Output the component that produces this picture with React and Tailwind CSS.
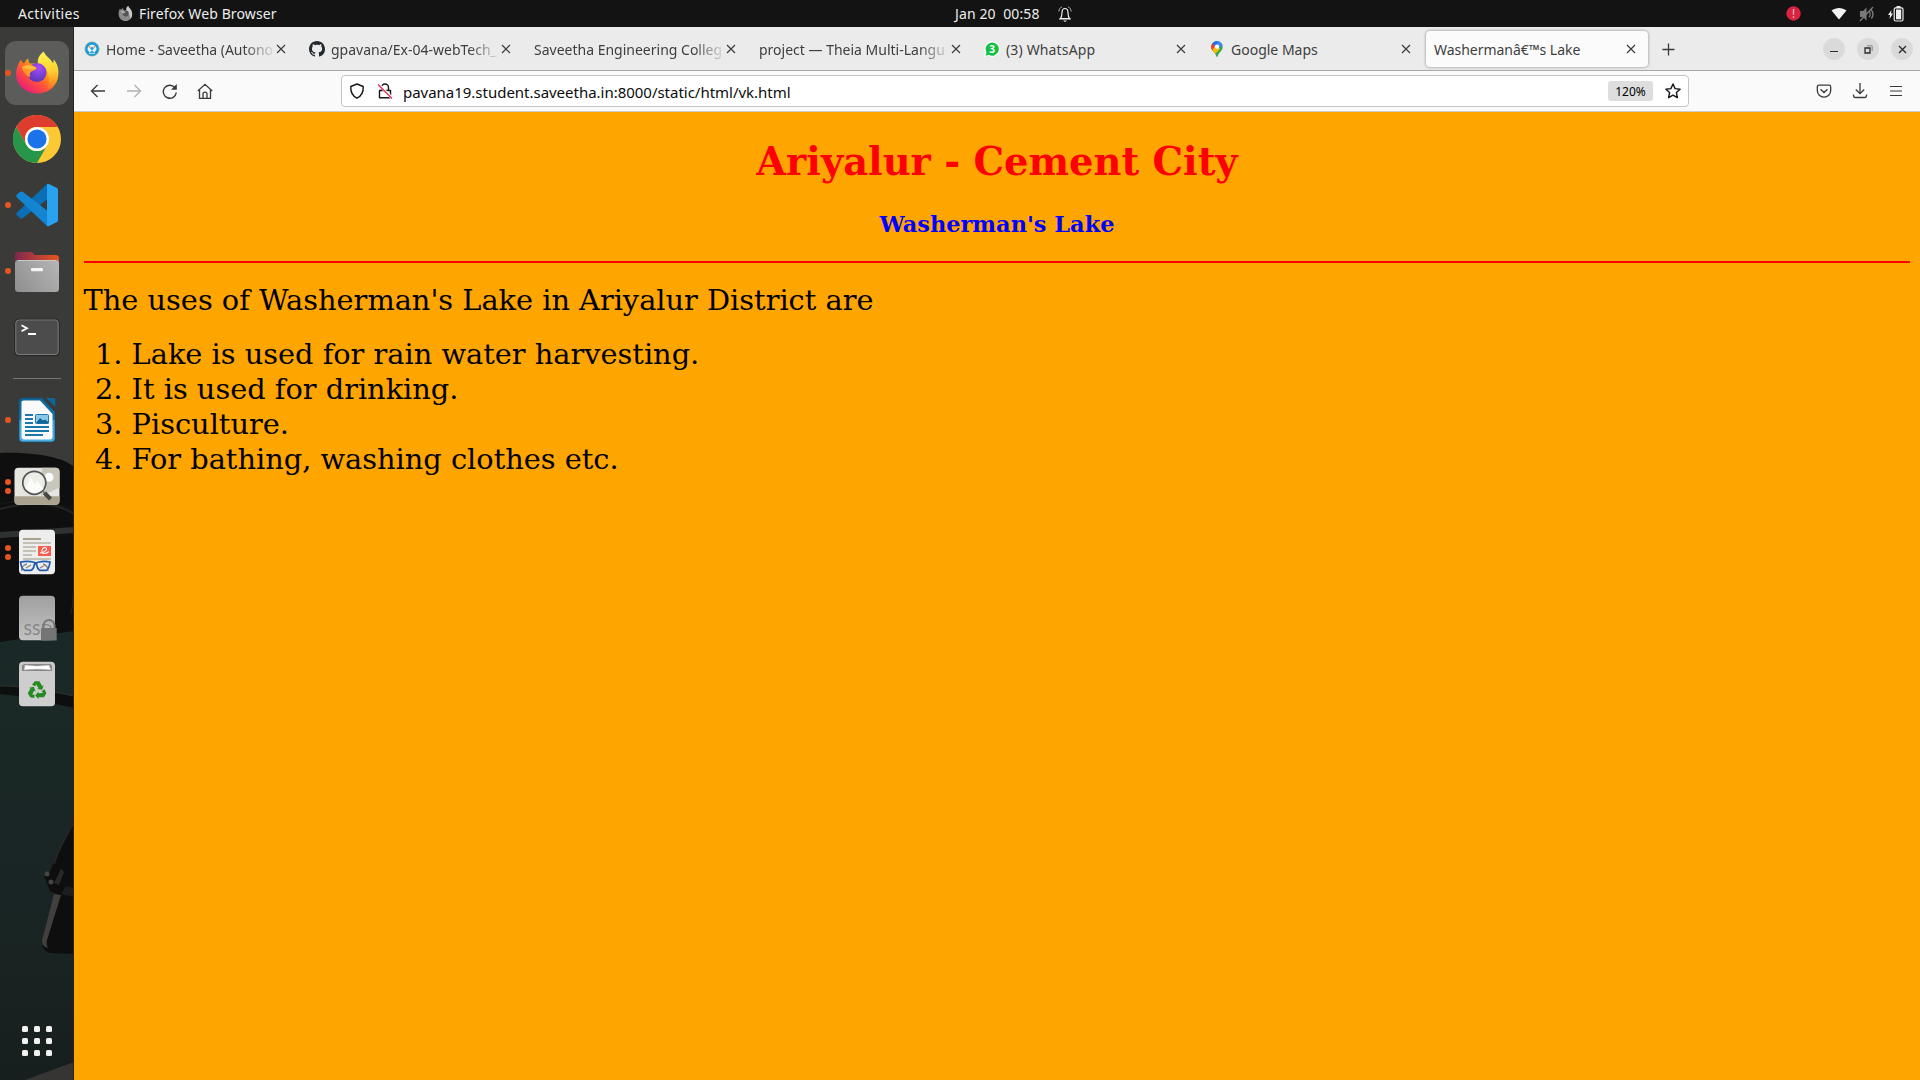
import React from "react";

const Svg = ({ w = 16, h, box, className = "", children }) => (
  <svg
    width={w}
    height={h ?? w}
    viewBox={box ?? `0 0 ${w} ${h ?? w}`}
    fill="none"
    className={`block shrink-0 ${className}`}
  >
    {children}
  </svg>
);

const FirefoxIcon = () => (
  <Svg w={48}>
    <defs>
      <linearGradient id="fxBody" x1="38" y1="8" x2="10" y2="44" gradientUnits="userSpaceOnUse">
        <stop offset="0.05" stopColor="#fff44f" />
        <stop offset="0.38" stopColor="#ff980e" />
        <stop offset="0.62" stopColor="#ff4f3c" />
        <stop offset="1" stopColor="#e31587" />
      </linearGradient>
      <linearGradient id="fxFlame" x1="34" y1="4" x2="38" y2="40" gradientUnits="userSpaceOnUse">
        <stop stopColor="#fff44f" />
        <stop offset="0.5" stopColor="#ffd030" />
        <stop offset="1" stopColor="#ff7a2a" stopOpacity="0.4" />
      </linearGradient>
      <radialGradient id="fxGlobe" cx="0.6" cy="0.25" r="0.8">
        <stop stopColor="#a94bf5" />
        <stop offset="1" stopColor="#5236b8" />
      </radialGradient>
    </defs>
    <path d="M8 10.500c.5 2 1.500 3.200 3 4 1.200-2.500 3-4.600 4.500-5-.2 2 .2 4 1.500 5h9c-1-5 2-9 5-11.500 1 4 6 6 9 11.500 1-1 1-3 .5-4 5 5 6 13 4 20-3 9-11 14-20 14C13 44.500 3 36 3 25c0-5 2-10.500 5-14.500z" fill="url(#fxBody)" />
    <path d="M25 14.500c-1-5 2-9 5.500-12 1 4 6.500 6.500 9.500 12 1-1 1-3 .5-4 6 7 5 18 1 24-2 3-5 5-8 6 4-6 3-16-1-21z" fill="url(#fxFlame)" />
    <circle cx="24" cy="23.500" r="9.500" fill="url(#fxGlobe)" />
    <path d="M9 18c5-3 10-3 14.500 1 .5 1-1 2-4 3-3 1-3 3-2 6-4-1-8-5-8.500-10z" fill="#ff9a27" />
    <path d="M9 18c5-2.500 10-2 14.500 1-2 2-9 2-14.500-1z" fill="#ffbd3f" />
  </Svg>
);

const ChromeIcon = () => (
  <Svg w={48}>
    <circle cx="24" cy="24" r="24" fill="#fcc934" />
    <path d="M3.200 12A24 24 0 0 1 44.800 12H24a12 12 0 0 0-10.400 18z" fill="#dd3c2e" />
    <path d="M3.200 12A24 24 0 0 0 24 48l10.400-18A12 12 0 0 1 13.600 30z" fill="#27964b" />
    <circle cx="24" cy="24" r="12" fill="#fff" />
    <circle cx="24" cy="24" r="9.600" fill="#1a73e8" />
  </Svg>
);

const CodeIcon = () => (
  <Svg w={48}>
    <path d="M34 3 4 31.500c-1 1-1 2 0 3l3 2.500c1 .7 2 .7 3 0L34 18.500z" fill="#0a6fb5" />
    <path d="M34 45 4 16.500c-1-1-1-2 0-3L7 11c1-.7 2-.7 3 0l24 18.500z" fill="#1486d1" />
    <path d="M34 3c.6-.4 1.300-.4 2 0l7.500 3.700c1 .5 1.500 1.200 1.500 2.300v30c0 1.100-.5 1.800-1.500 2.300L36 45c-.7.300-1.400.3-2 0z" fill="#29a3ef" />
  </Svg>
);

const FilesIcon = () => (
  <Svg w={48}>
    <defs>
      <linearGradient id="folderBack" x1="2" y1="0" x2="46" y2="0" gradientUnits="userSpaceOnUse">
        <stop stopColor="#80284f" />
        <stop offset="1" stopColor="#e95420" />
      </linearGradient>
      <linearGradient id="folderFront" x1="0" y1="42" x2="40" y2="12" gradientUnits="userSpaceOnUse">
        <stop stopColor="#8e8e8e" />
        <stop offset="1" stopColor="#b3b3b3" />
      </linearGradient>
    </defs>
    <path d="M2 9c0-3 1-4 4-4h11c2 0 3 .7 4 2l.5 1H42c3 0 4 1 4 4v12H2z" fill="url(#folderBack)" />
    <rect x="2" y="13" width="44" height="32" rx="3.500" fill="url(#folderFront)" />
    <path d="M5 13.500h38" stroke="#c9c9c9" />
    <rect x="18" y="21" width="12" height="3.200" rx="1" fill="#f4f4f4" />
  </Svg>
);

const TerminalIcon = () => (
  <Svg w={48}>
    <rect x="2" y="6.500" width="44" height="36" rx="3.500" fill="#4c4c4c" stroke="#292929" strokeWidth="1.500" />
    <rect x="2.800" y="7" width="42.400" height="34.500" rx="3" stroke="#7b7b7b" />
    <path d="m8.500 12.200 5.500 3-5.500 3M15 21h8" stroke="#fff" strokeWidth="1.800" />
  </Svg>
);

const WriterIcon = () => (
  <Svg w={48}>
    <defs>
      <linearGradient id="writerEdge" x1="0" y1="2" x2="0" y2="46" gradientUnits="userSpaceOnUse">
        <stop stopColor="#0e6699" />
        <stop offset="0.49" stopColor="#1b75a8" />
        <stop offset="0.51" stopColor="#3ea2d4" />
        <stop offset="1" stopColor="#4aaee0" />
      </linearGradient>
    </defs>
    <path d="M10 2h19l13 14v26c0 2.600-1.400 4-4 4H10c-2.600 0-4-1.400-4-4V6c0-2.600 1.400-4 4-4z" fill="url(#writerEdge)" stroke="#144d6d" strokeWidth="0.700" />
    <path d="M10.500 4.500H27L39.500 18v22.500c0 2-.8 3-3 3h-25c-2 0-3-1-3-3V6.500c0-1.300.7-2 2-2z" fill="#fafafa" />
    <path d="M33 2h8c1 0 1.300.5 1.300 1.500V11z" fill="#0e6699" />
    <path d="M12 19h8M12 23h8M12 27h8M12 31h24M12 35h24M12 39h18" stroke="#1a78aa" strokeWidth="1.900" />
    <rect x="22.500" y="18.500" width="13" height="9" rx="1" fill="#8cc9e9" stroke="#1a78aa" />
    <path d="m23 27 4-5 3 2.500 2-1 3.500 2.500v1.500z" fill="#0e6699" />
  </Svg>
);

const ImageViewerIcon = () => (
  <Svg w={48}>
    <rect x="1.500" y="5.700" width="45" height="37" rx="4" fill="#e6e5df" />
    <path d="M29 5.700h13.500c2.500 0 4 1.500 4 4v16L28 34z" fill="#c9c6bb" />
    <path d="M1.500 34.300h45V39c0 2.500-1.500 3.700-4 3.700h-37c-2.500 0-4-1.200-4-3.700z" fill="#aaa28f" />
    <circle cx="36" cy="15.300" r="4.500" fill="#fafafa" />
    <circle cx="21.300" cy="20.800" r="11.500" fill="#ecece9" stroke="#555" strokeWidth="1.700" />
    <path d="m12.500 26 5-11 4 7 3-3 6 8c-5 5-13 5-18-1z" fill="#fbfbfa" />
    <path d="m29.500 29 2 2" stroke="#777" strokeWidth="2" />
    <path d="m31.500 31 6 6" stroke="#464646" strokeWidth="4" />
  </Svg>
);

const DocumentViewerIcon = () => (
  <Svg w={48}>
    <rect x="6" y="1.700" width="36" height="44.500" rx="4" fill="#ededed" />
    <path d="M10 11h18" stroke="#aaa28c" strokeWidth="2" />
    <path d="M10 15h28M10 19h13M10 23h13M10 27h9M10 31h28" stroke="#c4c1b5" strokeWidth="1.800" />
    <rect x="25" y="18" width="13" height="10" fill="#fb5b4c" />
    <path d="M27 25c7-1 8-5 5-5.500-3 0-5 6-.5 6 2 0 3-1 4.500-2" stroke="#fff" strokeWidth="1.100" />
    <path d="M9 43c-1-3 1-6 5-7M35 43c0-3-1-6-5-7M13 40l5-3M27 40l5-3" stroke="#86857e" strokeWidth="1.300" />
    <path d="M7.500 34c5-.8 10-.6 13.500.3l2 .7 2-.7c3.500-.9 8-1.100 12-.3-.5 4-1.500 7-3.500 8.300H27c-2-1-3-3.300-3.500-6.300h-2c-.5 3-1.500 5.300-3.500 6.300h-6.500C9 41 8 38 7.500 34z" stroke="#1f5bb0" strokeWidth="1.700" />
  </Svg>
);

const DriveIcon = () => (
  <Svg w={48}>
    <defs>
      <linearGradient id="drive" x1="0" y1="2" x2="0" y2="46" gradientUnits="userSpaceOnUse">
        <stop stopColor="#a0a0a0" />
        <stop offset="1" stopColor="#c2c2c2" />
      </linearGradient>
    </defs>
    <rect x="6" y="1.800" width="36" height="44.400" rx="4" fill="url(#drive)" />
    <text x="10.500" y="40.500" fontSize="15.500" fill="#858585" fontFamily="Lato, sans-serif" textLength="29">SSD</text>
    <path d="M30.500 35v-3.500a5.500 5.500 0 0 1 11 0V35" stroke="#777" strokeWidth="2" />
    <path d="M28 34h15.700v12.500H28z" fill="#757575" />
  </Svg>
);

const TrashIcon = () => (
  <Svg w={48}>
    <rect x="6" y="1.800" width="36" height="44.500" rx="4" fill="#c9c9c9" />
    <path d="M9 11V7c0-2 1-3 3-3h24c2 0 3 1 3 3v4z" fill="#868686" />
    <path d="m11 10 1-5 12 1 12-1 2 5c-8-1-19-1-27 0z" fill="#fff" stroke="#aaa" strokeWidth="0.500" />
    <path d="M6.500 11h35v32c0 2-1 3-3 3h-29c-2 0-3-1-3-3z" fill="#cecece" />
    <g transform="translate(14.700 20.500) scale(0.78)" fill="#268a20">
      <path d="M7 1h6l3.500 6 2-1-2 6-6.500-1 2-1L9 5 7.500 7.500 3.500 5.500z" transform="translate(2 0)" />
      <path d="M7 1h6l3.500 6 2-1-2 6-6.500-1 2-1L9 5 7.500 7.500 3.500 5.500z" transform="rotate(120 12 13) translate(2 0)" />
      <path d="M7 1h6l3.500 6 2-1-2 6-6.500-1 2-1L9 5 7.500 7.500 3.500 5.500z" transform="rotate(240 12 13) translate(2 0)" />
    </g>
  </Svg>
);

const Wallpaper = () => (
  <Svg w={74} h={1053} box="0 27 74 1053" className="absolute inset-0">
    <defs>
      <linearGradient id="teal" x1="0" y1="630" x2="0" y2="1080" gradientUnits="userSpaceOnUse">
        <stop stopColor="#1a2927" />
        <stop offset="0.6" stopColor="#192524" />
        <stop offset="1" stopColor="#171f1e" />
      </linearGradient>
    </defs>
    <path d="M0 27h74v1053H0z" fill="#3a3a38" />
    <path d="M0 453c34-1 63 4 74 14v180H0z" fill="#0f0f0f" />
    <path d="M0 509c30-8 56-7 74 5" stroke="#242424" strokeWidth="2" />
    <path d="M0 504c26-5 50-5 74 7" stroke="#1b1b1b" />
    <path d="m0 532 74-5v6L0 538z" fill="#2e3231" />
    <path d="M74 560c0 30-1 45-3 54" stroke="#242424" />
    <path d="m0 642 74-11v449H0z" fill="url(#teal)" />
    <path d="M0 686c26 0 50 5 74 10v12c-24-5-48-12-74-14z" fill="#0d0e0e" />
    <path d="M0 686c26 0 50 5 74 10" stroke="#30302f" />
    <path d="M74 820c-10 18-18 34-24 52l-6 4 6 15 8 4-15 43c-3 9 2 15 10 15l21 1z" fill="#0e0e0e" />
    <path d="M74 822c-8 14-16 27-20 42" stroke="#252525" strokeWidth="2" />
    <path d="m54 894 7 1-14 45c-1 4 0 6 1 8-6-2-7-6-5-11z" fill="#41403f" />
    <path d="m54 883 7-14 3 3-5 13z" fill="#292929" />
    <circle cx="47" cy="874" r="2.500" fill="#444" />
    <circle cx="51" cy="882" r="2.500" fill="#444" />
    <path d="m61 894 5-8 8 2v9z" fill="#1d1d1d" />
    <path d="m25 1080 49-18v18z" fill="#363533" />
    <path d="M73.500 27v1053" stroke="#272420" />
  </Svg>
);

const Dot = () => <span className="size-[6px] rounded-full bg-[#e95420]" />;

function DockItem({ dots = 0, active, children }) {
  return (
    <div className="relative mb-[2px] flex h-16 w-full items-center justify-center">
      <div className={`flex size-16 items-center justify-center rounded-[11px] ${active ? "bg-[#5c5c5a]" : ""}`}>
        {children}
      </div>
      <div className="absolute top-0 left-[5px] flex h-full flex-col justify-center gap-[3px]">
        {dots > 0 && <Dot />}
        {dots > 1 && <Dot />}
      </div>
    </div>
  );
}

function Dock() {
  return (
    <aside className="relative h-full w-[74px] shrink-0 overflow-hidden">
      <Wallpaper />
      <div className="relative flex h-full flex-col items-center pt-[14px]">
        <DockItem dots={1} active><FirefoxIcon /></DockItem>
        <DockItem><ChromeIcon /></DockItem>
        <DockItem dots={1}><CodeIcon /></DockItem>
        <DockItem dots={1}><FilesIcon /></DockItem>
        <DockItem><TerminalIcon /></DockItem>
        <div className="mt-[7px] mb-[9px] h-px w-12 bg-[#757573]" />
        <DockItem dots={1}><WriterIcon /></DockItem>
        <DockItem dots={2}><ImageViewerIcon /></DockItem>
        <DockItem dots={2}><DocumentViewerIcon /></DockItem>
        <DockItem><DriveIcon /></DockItem>
        <DockItem><TrashIcon /></DockItem>
        <div className="mt-auto mb-[24px] grid grid-cols-3 gap-[6px]">
          {Array.from({ length: 9 }, (_, i) => (
            <span key={i} className="size-[6px] rounded-[1.500px] bg-[#f2f2f0]" />
          ))}
        </div>
      </div>
    </aside>
  );
}

function TopBar() {
  return (
    <header className="flex h-[27px] shrink-0 items-center bg-[#131313] text-[14px] leading-[26px] text-[#ededed]">
      <div className="flex h-[26px] w-[955px] items-center pl-[18px]">
        <span className="w-[100px] tracking-[0.350px]">Activities</span>
        <Svg w={15} box="0 0 16 16" className="mr-[6px]">
          <path d="M2 3c.5.800 1 1 1.500 1C4 3 5 2.500 5.500 2.500 5.500 4 6 4.500 7 5l2-1C8.500 2 10 .5 11 0c.5 2 2 2.500 3 4.500C16 8 15 11 14 13c-3 4-9 4-12 0C0 10 .5 5.500 2 3z" fill="#8b8b8b" />
          <path d="M11 0c.5 2 2 2.500 3 4.500 2 3.500 1 7-.5 9-1-6-5-6-4.500-9.500C8.500 2 10 .5 11 0z" fill="#c9c9c9" />
          <circle cx="8.300" cy="8" r="3.200" fill="#555" />
          <path d="M3 6c2-1 4-.5 5 .5L6 8z" fill="#b5b5b5" />
        </Svg>
        <span className="tracking-[0.120px]">Firefox Web Browser</span>
      </div>
      <div className="flex h-[26px] items-center">
        <span className="w-[103px] whitespace-pre tracking-[0.120px]">{"Jan 20  00:58"}</span>
        <Svg w={14} h={16}>
          <path d="M2.500 12.500C4 11 3.800 9.500 4 6.500c.1-2.500 1-4 3-4s2.900 1.500 3 4c.2 3 0 4.500 1.500 6zM1 13h12" stroke="#eee" strokeWidth="1.200" />
          <path d="M5 14.500h4L7 16z" fill="#eee" />
          <path d="M.8 5.500C1 3.500 2 1.500 4 .8M13.200 5.500C13 3.500 12 1.500 10 .8" stroke="#aaa" />
        </Svg>
      </div>
      <div className="ml-auto flex h-[26px] items-center justify-end pr-[16px]">
        <Svg w={15} className="mr-[30px]">
          <circle cx="7.500" cy="7.500" r="7.200" fill="#da2340" />
          <path d="M7.500 3v5.800M7.500 10.300V12" stroke="#f5b8c0" strokeWidth="1.300" />
        </Svg>
        <Svg w={16} h={13} className="mr-[12px]">
          <path d="M.5 3.500C5 0 11 0 15.500 3.500L8 12.500z" fill="#f0f0f0" />
        </Svg>
        <Svg w={16} className="mr-[12px]">
          <path d="M1 5h3l3.500-3.500v13L4 11H1z" fill="#7a7a7a" />
          <path d="m1 15 13-14M10 5.500c1.500 1.500 1.500 4 0 5.500M12.300 4c2 2.500 2 6 0 8.500" stroke="#7a7a7a" strokeWidth="1.400" />
        </Svg>
        <Svg w={17} h={16}>
          <path d="M4.500 4 1 9h2l-.5 4L6 7.500H4z" fill="#eee" />
          <path d="M9.500 1h4" stroke="#eee" strokeWidth="2" />
          <rect x="7.200" y="1.800" width="8.800" height="13.200" rx="1.500" stroke="#eee" strokeWidth="1.200" />
          <rect x="9" y="3.500" width="5.200" height="9.800" fill="#eee" />
        </Svg>
      </div>
    </header>
  );
}

const SaveethaFavicon = () => (
  <Svg w={16}>
    <circle cx="8" cy="8" r="6.900" fill="#1d9bd8" stroke="#4c9f9c" strokeDasharray="1.500 0.700" />
    <path d="M3.500 8.500c0-3 2-4.700 4.500-4.700s4.500 1.700 4.500 4.700l-2 3-2.500-2-2.500 2z" fill="#e8f5fb" />
    <path d="m6 7.500 2-2 2 2-2 2z" fill="#2aa0da" />
    <path d="M4.800 6h1.700M9.500 6h1.700" stroke="#f08a3c" strokeWidth="1.400" />
    <path d="M5 12.300h6" stroke="#cfeaf7" />
  </Svg>
);

const GithubFavicon = () => (
  <Svg w={16}>
    <path fill="#24292f" d="M8 0C3.580 0 0 3.580 0 8c0 3.540 2.290 6.530 5.470 7.590.4.070.55-.17.55-.38 0-.19-.01-.82-.01-1.490-2.010.37-2.530-.49-2.690-.94-.09-.23-.48-.94-.82-1.130-.28-.15-.68-.52-.01-.53.63-.01 1.080.58 1.230.82.72 1.210 1.870.87 2.330.66.07-.52.28-.87.51-1.070-1.780-.2-3.640-.89-3.640-3.950 0-.87.31-1.590.82-2.150-.08-.2-.36-1.020.08-2.120 0 0 .67-.21 2.200.82.64-.18 1.320-.27 2-.27s1.360.09 2 .27c1.530-1.040 2.200-.82 2.200-.82.44 1.100.16 1.920.08 2.120.51.56.82 1.270.82 2.150 0 3.070-1.870 3.750-3.650 3.950.29.25.54.73.54 1.480 0 1.070-.01 1.930-.01 2.200 0 .21.15.46.55.38A8 8 0 0 0 16 8c0-4.420-3.580-8-8-8z" />
  </Svg>
);

const WhatsappFavicon = () => (
  <Svg w={16}>
    <path d="M8 .3A7.700 7.700 0 1 1 4.300 14.700L0 16l1.200-4.300A7.700 7.700 0 0 1 8 .3z" fill="#fff" />
    <path d="M8.200 1.500a6.600 6.600 0 1 1-3.300 12.300L1.500 14.700l1-3.300A6.600 6.600 0 0 1 8.200 1.500z" fill="#12c143" />
    <text x="8.200" y="11.700" textAnchor="middle" fontSize="10" fontWeight="700" fill="#fff" fontFamily="Open Sans, sans-serif">3</text>
  </Svg>
);

const MapsFavicon = () => (
  <Svg w={16}>
    <defs>
      <clipPath id="pin">
        <path d="M8 0a5.700 5.700 0 0 0-5.700 5.700c0 4.500 4 5.300 5 9.500.2 1 1.200 1 1.400 0 1-4.200 5-5 5-9.500A5.700 5.700 0 0 0 8 0z" />
      </clipPath>
    </defs>
    <g clipPath="url(#pin)">
      <path d="M0 0h16v16H0z" fill="#34a853" />
      <path d="M3.200 2 8 6 3.500 11 0 8z" fill="#ea4335" />
      <path d="M3 0h6l1 3-4 3.500L3.200 2.500z" fill="#1a73e8" />
      <path d="M8 0h5l1 4-6 4z" fill="#4285f4" />
      <path d="m3 9 4-5 4 4-5 5z" fill="#fbbc04" />
      <path d="M3.200 2.500 6.500 5 2.500 9.500 0 6z" fill="#ea4335" />
    </g>
    <circle cx="8" cy="5.700" r="2.200" fill="#fff" />
  </Svg>
);

const CloseGlyph = () => (
  <Svg w={10} className="text-[#3b3b3d]">
    <path d="m1 1 8 8M9 1 1 9" stroke="currentColor" strokeWidth="1.150" />
  </Svg>
);

const tabs = [
  { title: "Home - Saveetha (Autono", icon: <SaveethaFavicon />, fade: true, spacing: "tracking-[-0.030px]" },
  { title: "gpavana/Ex-04-webTech_", icon: <GithubFavicon />, fade: true, spacing: "tracking-[0px]" },
  { title: "Saveetha Engineering Colleg", fade: true, spacing: "tracking-[0px]" },
  { title: "project — Theia Multi-Langu", fade: true, spacing: "tracking-[0px]" },
  { title: "(3) WhatsApp", icon: <WhatsappFavicon />, spacing: "tracking-[0.150px]" },
  { title: "Google Maps", icon: <MapsFavicon />, spacing: "tracking-[0px]" },
  { title: "Washermanâ€™s Lake", active: true, spacing: "tracking-[-0.030px]" },
];

function Tab({ title, icon, active, fade, spacing }) {
  return (
    <div
      className={`mt-px mr-[3px] flex h-9 w-[222px] shrink-0 items-center rounded pr-[12px] pl-[8px] ${
        active ? "bg-[#fbfbfb] shadow-[0_0_3px_rgba(0,0,0,0.45)]" : ""
      }`}
    >
      {icon && <span className="mr-[6px]">{icon}</span>}
      <span
        className={`min-w-0 flex-1 pt-[2px] whitespace-nowrap leading-[20px] ${
          fade ? "[mask-image:linear-gradient(to_right,black_calc(100%_-_32px),transparent)]" : ""
        } ${spacing}`}
      >
        {title}
      </span>
      <CloseGlyph />
    </div>
  );
}

const WindowButton = ({ children }) => (
  <span className="flex size-[22px] items-center justify-center rounded-full bg-[#dadada]">{children}</span>
);

function TabStrip() {
  return (
    <div className="flex h-[44px] items-center border-b border-[#a9a8a9] bg-[#ebebeb] pl-[2px] text-[14px] text-[#3e3e40]">
      {tabs.map((tab) => (
        <Tab key={tab.title} {...tab} />
      ))}
      <Svg w={13} className="mt-[2px] ml-[11px]">
        <path d="M6.500.500v12M.5 6.500h12" stroke="#3a3a3c" strokeWidth="1.300" />
      </Svg>
      <div className="mt-px ml-auto flex items-center gap-[12px] pr-[7px]">
        <WindowButton>
          <Svg w={8}><path d="M0 6.500h8" stroke="#2d2d2d" /></Svg>
        </WindowButton>
        <WindowButton>
          <Svg w={9}>
            <path d="M1 3h5v5H1z" stroke="#2d2d2d" strokeWidth="1.300" />
            <path d="M3 .8h5.200V6" stroke="#888" />
          </Svg>
        </WindowButton>
        <WindowButton>
          <Svg w={9}><path d="m1 1 7 7M8 1 1 8" stroke="#2d2d2d" strokeWidth="1.400" /></Svg>
        </WindowButton>
      </div>
    </div>
  );
}

function Toolbar() {
  return (
    <div className="flex h-[41px] items-center border-b border-[#cccccf] bg-[#fafafa] pl-[16px] pr-[16px] text-[#3a3a3d]">
      <div className="flex w-[251px] items-center gap-[20px]">
        <Svg w={16}><path d="M15 8H2M7.500 2 1.500 8l6 6" stroke="currentColor" strokeWidth="1.300" /></Svg>
        <Svg w={16} className="text-[#b0b0b2]"><path d="M1 8h13M8.500 2l6 6-6 6" stroke="currentColor" strokeWidth="1.300" /></Svg>
        <Svg w={16}>
          <path d="M14.300 9.500A6.500 6.500 0 1 1 12.800 4.500" stroke="currentColor" strokeWidth="1.400" />
          <path d="M14.800 1v5.800H9z" fill="currentColor" />
        </Svg>
        <Svg w={16} className="-ml-px">
          <path d="M.8 8 8 1.300 15.200 8M2.500 7v8.300h11V7M6 15v-4c0-2.500 4-2.500 4 0v4" stroke="currentColor" strokeWidth="1.300" />
        </Svg>
      </div>
      <div className="flex h-8 w-[1348px] items-center rounded border border-[#c5c5c9] bg-white text-[#15141a]">
        <Svg w={16} className="ml-[7px]">
          <path d="M8 1 1.800 3.500c-.3 5 1.700 9.500 6.200 11.700 4.500-2.200 6.500-6.700 6.200-11.700z" stroke="currentColor" strokeWidth="1.400" strokeLinejoin="round" />
        </Svg>
        <Svg w={16} className="ml-[12px]">
          <path d="M4.500 7V4.500a3.500 3.500 0 0 1 7 0V7M2.500 7.500h11v7.300h-11z" stroke="currentColor" strokeWidth="1.400" strokeLinejoin="round" />
          <path d="m1.500 1.500 14 14" stroke="#fff" strokeWidth="3" />
          <path d="m1 1.500 14 14" stroke="#e22850" strokeWidth="1.300" />
        </Svg>
        <span className="ml-[10px] pt-px text-[15px] leading-[20px] tracking-[-0.020px] text-[#0c0c0d]">
          pavana19.student.saveetha.in:8000/static/html/vk.html
        </span>
        <span className="mr-[12px] ml-auto flex h-5 w-[45px] items-center justify-center rounded-[3px] bg-[#dedede] pt-px text-[12px] text-black">
          120%
        </span>
        <Svg w={16} className="mr-[7px]">
          <path d="m8 1 2.100 4.600 5 .6-3.700 3.400 1 5L8 12.100l-4.400 2.500 1-5L.9 6.200l5-.6z" stroke="currentColor" strokeWidth="1.400" strokeLinejoin="round" />
        </Svg>
      </div>
      <div className="ml-auto flex items-center gap-[20px]">
        <Svg w={16}>
          <path d="M3 2.200h10c1 0 1.700.7 1.700 1.700V7.500a6.700 6.700 0 0 1-13.400 0V3.900C1.300 2.900 2 2.200 3 2.200zM4.500 6.200 8 9.500l3.500-3.300" stroke="currentColor" strokeWidth="1.300" />
        </Svg>
        <Svg w={16}>
          <path d="M8 0v10.500M3.800 6.500 8 10.700l4.200-4.200M1.500 11.500v1.300c0 1 .7 1.700 1.700 1.700h9.600c1 0 1.700-.7 1.700-1.700v-1.300" stroke="currentColor" strokeWidth="1.300" />
        </Svg>
        <Svg w={16}><path d="M2 3.500h12M2 8h12M2 12.500h12" stroke="currentColor" strokeWidth="1.200" /></Svg>
      </div>
    </div>
  );
}

function Page() {
  return (
    <main className="flex-1 bg-[#ffa500] px-[9.600px] pt-[27px] font-['DejaVu_Serif',serif] text-[28.800px] leading-[35px] text-black">
      <h1 className="text-center text-[38.400px] leading-[46px] font-bold text-[#ff0000]">Ariyalur - Cement City</h1>
      <h3 className="mt-[26px] text-center text-[22.460px] leading-[26px] font-bold text-[#0000ff]">Washerman's Lake</h3>
      <hr className="mt-[24px] h-[2px] border-0 bg-[#ff0000]" />
      <p className="mt-[20px]">The uses of Washerman's Lake in Ariyalur District are</p>
      <ol className="mt-[19px] list-decimal pl-12">
        <li>Lake is used for rain water harvesting.</li>
        <li>It is used for drinking.</li>
        <li>Pisculture.</li>
        <li>For bathing, washing clothes etc.</li>
      </ol>
    </main>
  );
}

export default function App() {
  return (
    <div className="flex h-[1080px] w-[1920px] flex-col overflow-hidden font-['Noto_Sans',sans-serif]">
      <TopBar />
      <div className="flex min-h-0 flex-1">
        <Dock />
        <div className="flex min-w-0 flex-1 flex-col">
          <TabStrip />
          <Toolbar />
          <Page />
        </div>
      </div>
    </div>
  );
}
